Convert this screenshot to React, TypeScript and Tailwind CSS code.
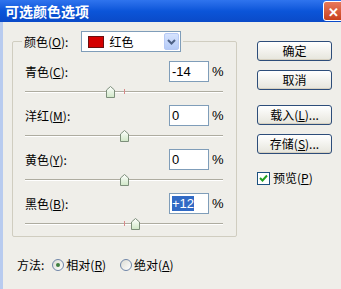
import React from "react";

const FONT = { fontFamily: '"Noto Sans CJK SC", "Liberation Sans", sans-serif' };

function Key({ children }: { children: React.ReactNode }) {
  return <span className="underline underline-offset-[1px]">{children}</span>;
}

function Thumb() {
  return (
    <svg width="9" height="12" viewBox="0 0 9 12" className="block">
      <defs>
        <linearGradient id="tg" x1="0" y1="0" x2="0" y2="1">
          <stop offset="0" stopColor="#ffffff" />
          <stop offset="1" stopColor="#cfe7c6" />
        </linearGradient>
      </defs>
      <path d="M4.5 0.5 L8.5 4 L8.5 11.5 L0.5 11.5 L0.5 4 Z" fill="url(#tg)" stroke="#7d8f7b" strokeWidth="1" />
    </svg>
  );
}

function Slider({ value }: { value: number }) {
  const left = 99 + value * 0.98 - 4.5;
  return (
    <div className="relative h-[23px] w-[198px]">
      <div className="absolute left-0 right-0 top-[9px] h-[2px] border-t border-[#aeaca0] bg-white" />
      {value !== 0 && <div className="absolute left-[99px] top-[7px] h-[5px] w-px bg-[#d88a8a]" />}
      <div className="absolute top-[4px]" style={{ left }}>
        <Thumb />
      </div>
    </div>
  );
}

function Row({ label, k, value, selected }: { label: string; k: string; value: number; selected?: boolean }) {
  const text = value > 0 ? `+${value}` : `${value}`;
  return (
    <div className="flex flex-col">
      <div className="flex h-[21px] items-center">
        <span className="text-[12px] text-black">
          {label}(<Key>{k}</Key>):
        </span>
        <div className="ml-auto flex h-[21px] w-[40px] items-center border border-[#7f9db9] bg-white pl-[2px]">
          <span
            className={
              selected
                ? "bg-[#316ac5] text-[13px] leading-[15px] text-white"
                : "text-[13px] leading-[15px] text-black"
            }
            style={{ fontFamily: '"Liberation Sans", sans-serif' }}
          >
            {text}
          </span>
        </div>
        <span className="ml-[3px] w-[12px] text-[13px]" style={{ fontFamily: '"Liberation Sans", sans-serif' }}>
          %
        </span>
      </div>
      <Slider value={value} />
    </div>
  );
}

function XpButton({ children }: { children: React.ReactNode }) {
  return (
    <div className="flex h-[20px] w-[75px] items-center justify-center rounded-[3px] border border-[#2d4d7a] bg-gradient-to-b from-white to-[#e6e5dc] text-[12px] text-black shadow-[inset_0_-1px_0_#d6d0c0]">
      {children}
    </div>
  );
}

function Radio({ checked }: { checked?: boolean }) {
  return (
    <div className="flex h-[12px] w-[12px] items-center justify-center rounded-full border border-[#6f86a8] bg-gradient-to-br from-[#dcdcd4] to-white">
      {checked && <div className="h-[4px] w-[4px] rounded-full bg-[#3f7f3f]" />}
    </div>
  );
}

export default function App() {
  return (
    <div className="flex h-[289px] w-[341px] flex-col overflow-hidden bg-[#efeee9]" style={FONT}>
      <div className="flex h-[22px] items-center justify-between bg-gradient-to-b from-[#2f74ee] via-[#0b55d9] to-[#0a4ac8]">
        <span className="pl-[5px] text-[14px] font-bold tracking-[0px] text-white">可选颜色选项</span>
        <div className="mr-[-3px] flex h-[20px] w-[21px] items-center justify-center rounded-[3px] border border-white bg-gradient-to-b from-[#e8785a] to-[#c8401c] text-[13px] font-bold leading-none text-white">
          ✕
        </div>
      </div>

      <div className="flex flex-1 flex-col border-l-[3px] border-[#b8cbef]">
        <div className="flex">
          <div className="pl-[9px] pt-[9px]">
            <fieldset className="h-[206px] w-[225px] rounded-[2px] border border-[#d0cdc0] px-[12px] pt-[9px]">
              <legend className="ml-[-3px] px-[2px]">
                <div className="flex items-center">
                  <span className="text-[12px] text-black">
                    颜色(<Key>O</Key>):
                  </span>
                  <div className="ml-[13px] flex h-[21px] w-[100px] items-center border border-[#7f9db9] bg-white pl-[6px]">
                    <div className="h-[12px] w-[16px] border border-[#6a1010] bg-[#d40000]" />
                    <span className="ml-[5px] text-[12px] text-black">红色</span>
                    <div className="ml-auto mr-px flex h-[17px] w-[15px] items-center justify-center rounded-[2px] border border-[#b6c9f5] bg-gradient-to-b from-[#d6e3fe] to-[#b5cbf7]">
                      <svg width="9" height="6" viewBox="0 0 9 6">
                        <path d="M1 1 L4.5 4.5 L8 1" fill="none" stroke="#4d6185" strokeWidth="2" />
                      </svg>
                    </div>
                  </div>
                </div>
              </legend>
              <Row label="青色" k="C" value={-14} />
              <Row label="洋红" k="M" value={0} />
              <Row label="黄色" k="Y" value={0} />
              <Row label="黑色" k="B" value={12} selected />
            </fieldset>
          </div>

          <div className="ml-[20px] flex flex-col pt-[19px]">
            <XpButton>确定</XpButton>
            <div className="mt-[9px]">
              <XpButton>取消</XpButton>
            </div>
            <div className="mt-[15px]">
              <XpButton>
                载入(<Key>L</Key>)...
              </XpButton>
            </div>
            <div className="mt-[9px]">
              <XpButton>
                存储(<Key>S</Key>)...
              </XpButton>
            </div>
            <div className="mt-[15px] flex items-center">
              <div className="flex h-[13px] w-[13px] items-center justify-center border border-[#1c5180] bg-white">
                <svg width="9" height="8" viewBox="0 0 9 8">
                  <path d="M1 4 L3.5 6.5 L8 1.5" fill="none" stroke="#21a121" strokeWidth="2" />
                </svg>
              </div>
              <span className="ml-[3px] text-[12px] text-black">
                预览(<Key>P</Key>)
              </span>
            </div>
          </div>
        </div>

        <div className="mt-[18px] flex h-[20px] items-center pl-[14px] text-[12px] text-black">
          <span>方法:</span>
          <div className="ml-[8px]">
            <Radio checked />
          </div>
          <span className="ml-[2px]">
            相对(<Key>R</Key>)
          </span>
          <div className="ml-[14px]">
            <Radio />
          </div>
          <span className="ml-[2px]">
            绝对(<Key>A</Key>)
          </span>
        </div>
      </div>
    </div>
  );
}
